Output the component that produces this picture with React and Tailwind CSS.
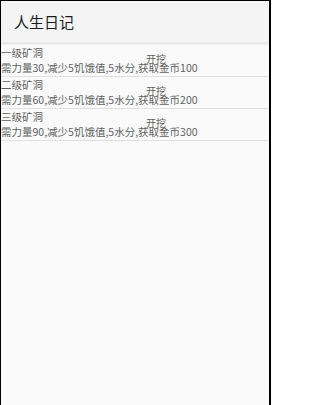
import React from "react";

const rows = [
  { name: "一级矿洞", desc: "需力量30,减少5饥饿值,5水分,获取金币100" },
  { name: "二级矿洞", desc: "需力量60,减少5饥饿值,5水分,获取金币200" },
  { name: "三级矿洞", desc: "需力量90,减少5饥饿值,5水分,获取金币300" },
];

export default function App() {
  return (
    <div
      className="w-[271px] h-[405px] bg-black pt-px pl-px pr-[2px] overflow-hidden"
      style={{ fontFamily: '"Noto Sans CJK SC", Roboto, "Noto Sans", sans-serif' }}
    >
      <div className="h-full bg-[#fafafa] flex flex-col">
        <div className="h-[41px] bg-[#f4f4f4] flex items-center pl-[13px] shrink-0">
          <span className="text-[15px] leading-none text-[#1c1c1c] tracking-[0px]">人生日记</span>
        </div>
        <div className="h-[3px] bg-gradient-to-b from-[#e4e4e4] to-[#f0f0f0] shrink-0" />
        <div className="flex flex-col">
          {rows.map((r) => (
            <div key={r.name} className="grid h-[32px] border-b border-[#e0e0e0]">
              <div className="col-start-1 row-start-1 flex flex-col text-[10.5px] leading-[15px] text-[#5f5f5f]">
                <span>{r.name}</span>
                <span className="whitespace-nowrap">{r.desc}</span>
              </div>
              <div className="col-start-1 row-start-1 ml-[145px] mt-[8px] text-[10px] leading-[12px] text-[#5f5f5f]">
                开挖
              </div>
            </div>
          ))}
        </div>
      </div>
    </div>
  );
}
